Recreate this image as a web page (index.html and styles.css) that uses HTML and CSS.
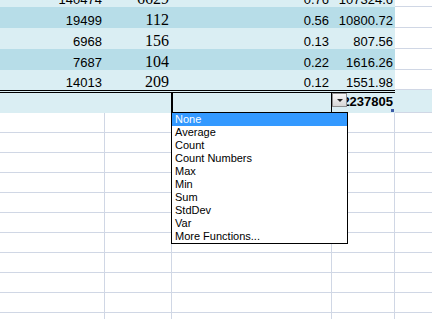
FILE: index.html
```html
<!DOCTYPE html>
<html lang="en">
<head>
    <meta charset="UTF-8">
    <title>Total row</title>
    <link rel="stylesheet" href="styles.css">
</head>
<body>

    <div class="sheet">

        <!-- Table rows (scrolled, first one is cut off) -->
        <div class="row band-light row-first">
            <div class="cell">140474</div>
            <div class="cell serif">6629</div>
            <div class="cell">0.76</div>
            <div class="cell cell-d">107324.6</div>
            <div class="cell cell-e"></div>
        </div>
        <div class="row band-dark">
            <div class="cell">19499</div>
            <div class="cell serif">112</div>
            <div class="cell">0.56</div>
            <div class="cell cell-d">10800.72</div>
            <div class="cell cell-e"></div>
        </div>
        <div class="row band-light">
            <div class="cell">6968</div>
            <div class="cell serif">156</div>
            <div class="cell">0.13</div>
            <div class="cell cell-d">807.56</div>
            <div class="cell cell-e"></div>
        </div>
        <div class="row band-dark">
            <div class="cell">7687</div>
            <div class="cell serif">104</div>
            <div class="cell">0.22</div>
            <div class="cell cell-d">1616.26</div>
            <div class="cell cell-e"></div>
        </div>
        <div class="row band-light row-last">
            <div class="cell">14013</div>
            <div class="cell serif">209</div>
            <div class="cell">0.12</div>
            <div class="cell cell-d">1551.98</div>
            <div class="cell cell-e"></div>
        </div>

        <!-- Total row -->
        <div class="row total">
            <div class="cell"></div>
            <div class="cell"></div>
            <div class="cell active">
                <span class="drop-btn"><span class="arrow"></span></span>
                <ul class="func-list">
                    <li class="selected">None</li>
                    <li>Average</li>
                    <li>Count</li>
                    <li>Count Numbers</li>
                    <li>Max</li>
                    <li>Min</li>
                    <li>Sum</li>
                    <li>StdDev</li>
                    <li>Var</li>
                    <li>More Functions...</li>
                </ul>
            </div>
            <div class="cell cell-d bold">2237805<span class="resize-handle"></span></div>
            <div class="cell cell-e"></div>
        </div>

        <!-- Empty sheet -->
        <div class="row empty"><div class="cell"></div><div class="cell"></div><div class="cell"></div><div class="cell"></div><div class="cell"></div></div>
        <div class="row empty"><div class="cell"></div><div class="cell"></div><div class="cell"></div><div class="cell"></div><div class="cell"></div></div>
        <div class="row empty"><div class="cell"></div><div class="cell"></div><div class="cell"></div><div class="cell"></div><div class="cell"></div></div>
        <div class="row empty"><div class="cell"></div><div class="cell"></div><div class="cell"></div><div class="cell"></div><div class="cell"></div></div>
        <div class="row empty"><div class="cell"></div><div class="cell"></div><div class="cell"></div><div class="cell"></div><div class="cell"></div></div>
        <div class="row empty"><div class="cell"></div><div class="cell"></div><div class="cell"></div><div class="cell"></div><div class="cell"></div></div>
        <div class="row empty"><div class="cell"></div><div class="cell"></div><div class="cell"></div><div class="cell"></div><div class="cell"></div></div>
        <div class="row empty"><div class="cell"></div><div class="cell"></div><div class="cell"></div><div class="cell"></div><div class="cell"></div></div>
        <div class="row empty"><div class="cell"></div><div class="cell"></div><div class="cell"></div><div class="cell"></div><div class="cell"></div></div>
        <div class="row empty"><div class="cell"></div><div class="cell"></div><div class="cell"></div><div class="cell"></div><div class="cell"></div></div>
        <div class="row empty"><div class="cell"></div><div class="cell"></div><div class="cell"></div><div class="cell"></div><div class="cell"></div></div>

    </div>

</body>
</html>
```

FILE: styles.css
```css
/* Basic page */
body {
    margin: 0;
    padding: 0;
    background-color: white;
    font-family: "Liberation Sans", Arial, sans-serif;
    font-size: 13px;
    color: #000;
    overflow: hidden;
}

.sheet {
    width: 432px;
    height: 319px;
    overflow: hidden;
}

/* Rows and columns */
.row {
    display: grid;
    grid-template-columns: 105px 67px 160px 63px 1fr;
    height: 21px;
}

.row-first {
    margin-top: -14px;
}

.row-last {
    height: 20px;
}

.cell {
    display: flex;
    align-items: flex-end;
    justify-content: flex-end;
    padding: 0 3px 1px 0;
    line-height: 1;
    white-space: nowrap;
    box-sizing: border-box;
}

.cell-d {
    padding-right: 2px;
}

.serif {
    font-family: "Liberation Serif", "Times New Roman", serif;
    font-size: 16px;
    padding-bottom: 0;
}

/* Table banding */
.band-light .cell {
    background-color: #daeef3;
}

.band-dark .cell {
    background-color: #b7dde8;
}

.row .cell-e {
    background-color: white;
    border-bottom: 1px solid #d0d7e5;
}

/* Total row */
.total {
    height: 23px;
}

.total .cell {
    background-color: #daeef3;
    border-top: 3px double #000;
    padding-bottom: 5px;
}

.total .cell-e {
    border-top: none;
}

.bold {
    font-weight: bold;
    position: relative;
}

.active {
    position: relative;
}

.active::after {
    content: "";
    position: absolute;
    top: 0;
    bottom: 0;
    left: -1px;
    right: -1px;
    border-left: 2px solid #000;
    border-right: 2px solid #000;
}

.drop-btn {
    position: absolute;
    top: 0;
    right: -15px;
    width: 15px;
    height: 14px;
    box-sizing: border-box;
    border: 1px solid #8e8f8f;
    background: linear-gradient(#f7f7f7, #d6d6d6);
    z-index: 3;
    display: flex;
    align-items: center;
    justify-content: center;
}

.arrow {
    width: 0;
    height: 0;
    border-left: 3px solid transparent;
    border-right: 3px solid transparent;
    border-top: 3px solid #222;
}

.resize-handle {
    position: absolute;
    right: 1px;
    bottom: 1px;
    width: 3px;
    height: 3px;
    background-color: #3d5ba8;
}

/* Dropdown list */
.func-list {
    position: absolute;
    top: 19px;
    left: -1px;
    width: 177px;
    margin: 0;
    padding: 0;
    list-style: none;
    background-color: white;
    border: 1px solid #000;
    box-sizing: border-box;
    z-index: 2;
    font-family: "Liberation Sans", Tahoma, sans-serif;
    font-size: 11px;
    font-weight: normal;
}

.func-list li {
    height: 13px;
    line-height: 13px;
    padding-left: 3px;
}

.func-list li.selected {
    background-color: #3399ff;
    color: white;
}

/* Empty sheet grid */
.empty {
    height: 20px;
}

.empty .cell {
    border-right: 1px solid #d0d7e5;
    border-bottom: 1px solid #d0d7e5;
}

.empty .cell:last-child {
    border-right: none;
}
```
